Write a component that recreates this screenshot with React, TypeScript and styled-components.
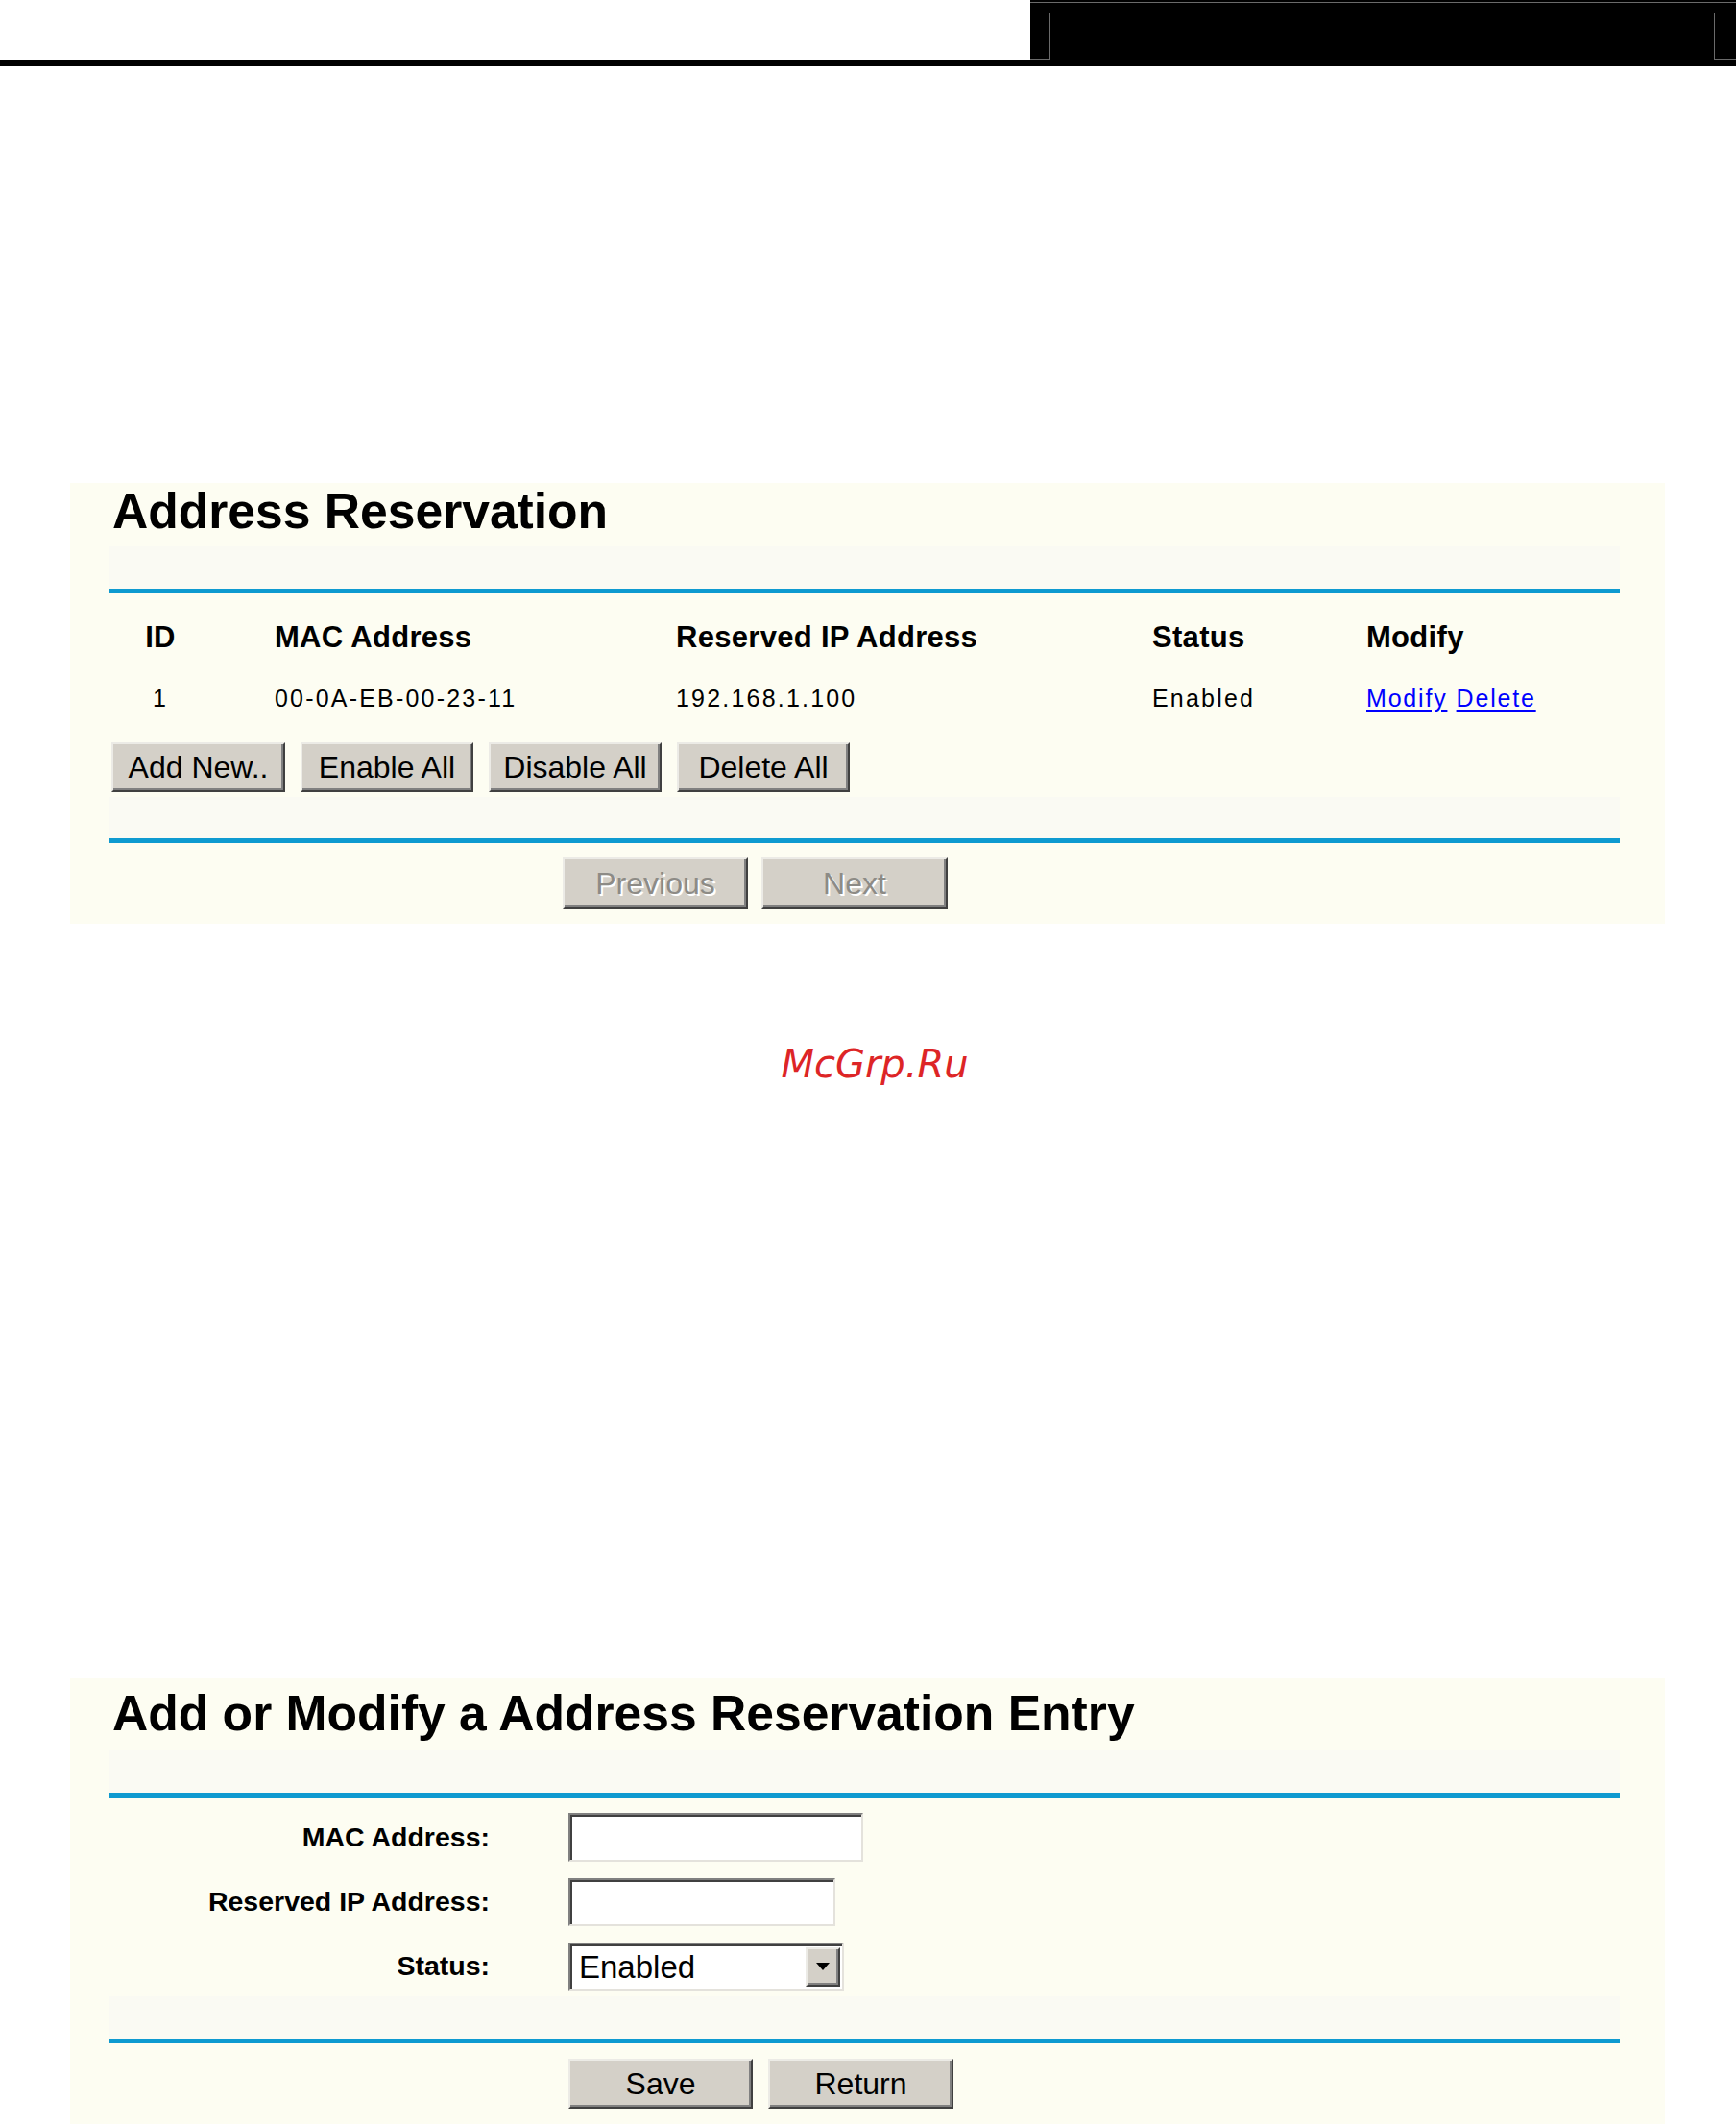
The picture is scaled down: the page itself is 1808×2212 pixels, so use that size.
import React from "react";
import styled, { createGlobalStyle } from "styled-components";

const Global = createGlobalStyle`
  html, body { margin: 0; padding: 0; background: #ffffff; }
  body { font-family: "Liberation Sans", Arial, sans-serif; color: #000; }
  * { box-sizing: border-box; }
`;

const Page = styled.div`
  width: 1808px;
  min-height: 2212px;
  overflow: hidden;
`;

/* ---------- top bar ---------- */
const TopBar = styled.div`
  display: flex;
  height: 69px;
`;
const TopFill = styled.div`
  flex: 1;
  border-bottom: 6px solid #000;
`;
const TopBlock = styled.div`
  width: 735px;
  background: #000;
  display: flex;
  flex-direction: column;
`;
const TopRule = styled.div`
  margin-top: 2px;
  height: 1px;
  background: #6a6a6a;
`;
const TopFrame = styled.div`
  margin-top: 11px;
  height: 48px;
  display: flex;
`;
const Tick = styled.div<{ $w: number }>`
  width: ${(p) => p.$w}px;
  border-bottom: 1px solid #6a6a6a;
`;
const FrameMid = styled.div`
  flex: 1;
  border-left: 1px solid #6a6a6a;
  border-right: 1px solid #6a6a6a;
`;

/* ---------- panels ---------- */
const Panel = styled.section<{ $mt: number; $pt: number; $pb: number }>`
  margin-top: ${(p) => p.$mt}px;
  margin-left: 73px;
  width: 1661px;
  background: #fdfdf2;
  padding: ${(p) => p.$pt}px 47px ${(p) => p.$pb}px 40px;
`;
const Title = styled.h1`
  margin: 0 0 0 4px;
  font-size: 51.6px;
  line-height: 58px;
  font-weight: bold;
`;
const Band = styled.div<{ $mt: number; $h: number }>`
  margin-top: ${(p) => p.$mt}px;
  height: ${(p) => p.$h}px;
  background: #fafaf3;
`;
const BlueRule = styled.div`
  height: 5px;
  background: #0e9ad0;
`;

/* ---------- table ---------- */
const GridRow = styled.div<{ $mt: number; $head?: boolean }>`
  display: grid;
  grid-template-columns: 173px 418px 496px 223px 1fr;
  margin-top: ${(p) => p.$mt}px;
  font-size: ${(p) => (p.$head ? 31 : 25)}px;
  font-weight: ${(p) => (p.$head ? "bold" : "normal")};
  line-height: ${(p) => (p.$head ? 40 : 36)}px;
  letter-spacing: ${(p) => (p.$head ? 0.3 : 2.2)}px;
`;
const Cell = styled.div<{ $center?: boolean }>`
  white-space: nowrap;
  ${(p) => (p.$center ? "text-align: center; padding-right: 65px;" : "")}
`;
const Link = styled.a`
  color: #0000ff;
  text-decoration: underline;
  text-underline-offset: 3px;
  letter-spacing: 1.8px;
  cursor: pointer;
`;

/* ---------- buttons ---------- */
const ButtonRow = styled.div<{ $mt: number; $pl: number; $gap: number }>`
  display: flex;
  gap: ${(p) => p.$gap}px;
  margin-top: ${(p) => p.$mt}px;
  padding-left: ${(p) => p.$pl}px;
`;
const WinButton = styled.button<{ $w: number; $h: number }>`
  width: ${(p) => p.$w}px;
  height: ${(p) => p.$h}px;
  padding: 0;
  background: #d4d0c8;
  border: 2px solid;
  border-color: #ecebe6 #404040 #404040 #ecebe6;
  box-shadow: inset -2px -2px 0 #808080;
  font-family: "Liberation Sans", Arial, sans-serif;
  font-size: 32px;
  color: #000;
  white-space: nowrap;
  &:disabled {
    color: #8d8b86;
    text-shadow: 2px 2px 0 #ffffff;
  }
`;

/* ---------- watermark ---------- */
const Watermark = styled.div`
  margin-top: 122px;
  padding-left: 14px;
  text-align: center;
  font-family: "DejaVu Sans", sans-serif;
  font-style: oblique;
  font-size: 40px;
  line-height: 48px;
  color: #dd2526;
`;

/* ---------- form ---------- */
const FormGrid = styled.div`
  display: grid;
  row-gap: 16px;
  margin-top: 16px;
`;
const FormRow = styled.div`
  display: grid;
  grid-template-columns: 397px 1fr;
  column-gap: 82px;
  align-items: center;
  height: 51px;
`;
const Label = styled.label`
  text-align: right;
  font-size: 28.5px;
  font-weight: bold;
  line-height: 1;
  white-space: nowrap;
`;
const TextInput = styled.input<{ $w: number; $h: number }>`
  display: block;
  width: ${(p) => p.$w}px;
  height: ${(p) => p.$h}px;
  background: #fff;
  border: 2px solid;
  border-color: #808080 #e4e2dc #e4e2dc #808080;
  box-shadow: inset 2px 2px 0 #404040;
  padding: 0 6px;
  font-family: "Liberation Sans", Arial, sans-serif;
  font-size: 30px;
  outline: none;
`;
const SelectBox = styled.div`
  display: flex;
  width: 287px;
  height: 50px;
  background: #fff;
  border: 2px solid;
  border-color: #808080 #e4e2dc #e4e2dc #808080;
  box-shadow: inset 2px 2px 0 #404040;
  padding: 3px 2px 2px 3px;
`;
const SelectValue = styled.div`
  flex: 1;
  padding-left: 6px;
  font-size: 33px;
  line-height: 41px;
`;
const DropButton = styled.div`
  width: 36px;
  background: #d4d0c8;
  border: 2px solid;
  border-color: #ecebe6 #404040 #404040 #ecebe6;
  box-shadow: inset -2px -2px 0 #808080;
  display: flex;
  align-items: center;
  justify-content: center;
`;

export default function App() {
  return (
    <Page>
      <Global />
      <TopBar>
        <TopFill />
        <TopBlock>
          <TopRule />
          <TopFrame>
            <Tick $w={20} />
            <FrameMid />
            <Tick $w={22} />
          </TopFrame>
        </TopBlock>
      </TopBar>

      <Panel $mt={434} $pt={0} $pb={15}>
        <Title>Address Reservation</Title>
        <Band $mt={8} $h={44} />
        <BlueRule />
        <GridRow $mt={26} $head>
          <Cell $center>ID</Cell>
          <Cell>MAC Address</Cell>
          <Cell>Reserved IP Address</Cell>
          <Cell>Status</Cell>
          <Cell>Modify</Cell>
        </GridRow>
        <GridRow $mt={25}>
          <Cell $center>1</Cell>
          <Cell>00-0A-EB-00-23-11</Cell>
          <Cell>192.168.1.100</Cell>
          <Cell>Enabled</Cell>
          <Cell>
            <Link>Modify</Link> <Link>Delete</Link>
          </Cell>
        </GridRow>
        <ButtonRow $mt={28} $pl={3} $gap={16}>
          <WinButton $w={181} $h={52}>Add New..</WinButton>
          <WinButton $w={180} $h={52}>Enable All</WinButton>
          <WinButton $w={180} $h={52}>Disable All</WinButton>
          <WinButton $w={180} $h={52}>Delete All</WinButton>
        </ButtonRow>
        <Band $mt={5} $h={43} />
        <BlueRule />
        <ButtonRow $mt={15} $pl={473} $gap={14}>
          <WinButton $w={193} $h={54} disabled>Previous</WinButton>
          <WinButton $w={194} $h={54} disabled>Next</WinButton>
        </ButtonRow>
      </Panel>

      <Watermark>McGrp.Ru</Watermark>

      <Panel $mt={616} $pt={7} $pb={16}>
        <Title>Add or Modify a Address Reservation Entry</Title>
        <Band $mt={10} $h={44} />
        <BlueRule />
        <FormGrid>
          <FormRow>
            <Label>MAC Address:</Label>
            <TextInput $w={307} $h={51} />
          </FormRow>
          <FormRow>
            <Label>Reserved IP Address:</Label>
            <TextInput $w={278} $h={50} />
          </FormRow>
          <FormRow>
            <Label>Status:</Label>
            <SelectBox>
              <SelectValue>Enabled</SelectValue>
              <DropButton>
                <svg width="14" height="8" viewBox="0 0 14 8">
                  <path d="M0 0 H14 L7 8 Z" fill="#000" />
                </svg>
              </DropButton>
            </SelectBox>
          </FormRow>
        </FormGrid>
        <Band $mt={6} $h={44} />
        <BlueRule />
        <ButtonRow $mt={16} $pl={479} $gap={16}>
          <WinButton $w={192} $h={52}>Save</WinButton>
          <WinButton $w={193} $h={52}>Return</WinButton>
        </ButtonRow>
      </Panel>
    </Page>
  );
}
